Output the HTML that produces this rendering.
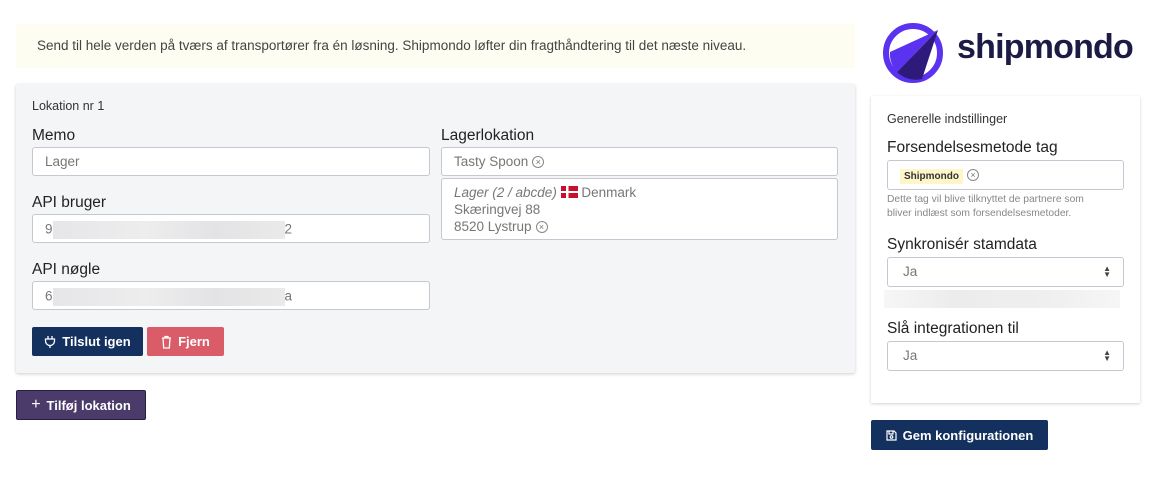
<!DOCTYPE html>
<html><head><meta charset="utf-8"><style>
*{box-sizing:border-box;margin:0;padding:0}
body{width:1154px;height:481px;background:#fff;font-family:"Liberation Sans","DejaVu Sans",sans-serif;color:#333;position:relative;overflow:hidden}
.a{position:absolute}
.banner{left:16px;top:24px;width:839px;height:44px;background:#fdfdf2;font-size:13.5px;color:#444;padding:14px 0 0 21px}
.card{left:16px;top:84px;width:839px;height:289px;background:#f4f5f7;box-shadow:0 1px 3px rgba(0,0,0,.2);border-radius:2px}
.lbl{font-size:15.5px;color:#222}
.inp{background:#fff;border:1px solid #c5c8d0;border-radius:3px;font-size:13.5px;color:#777;padding:6px 12px}
.blur{background:linear-gradient(90deg,#e6e6e8,#ededee 40%,#e3e3e5 70%,#eaeaea);height:18px;display:inline-block;vertical-align:middle}
.btn{color:#fff;font-size:13px;font-weight:bold;border-radius:2px;display:flex;align-items:center;justify-content:center;gap:6px}
.x{display:inline-block;width:12px;height:12px;border:1px solid #888;border-radius:50%;font-size:9px;line-height:10px;text-align:center;color:#777;vertical-align:middle;margin-left:4px}
.rc{left:871px;top:96px;width:269px;height:307px;background:#fff;box-shadow:0 1px 3px rgba(0,0,0,.18)}
.arr{position:absolute;right:12px;top:8px;font-size:8px;line-height:6px;color:#444}
</style></head><body>
<div class="a banner">Send til hele verden på tværs af transportører fra én løsning. Shipmondo løfter din fragthåndtering til det næste niveau.</div>
<div class="a card"></div>
<div class="a" style="left:32px;top:99px;font-size:12.5px;color:#333">Lokation nr 1</div>
<div class="a lbl" style="left:32px;top:127px">Memo</div>
<div class="a inp" style="left:32px;top:147px;width:398px;height:29px">Lager</div>
<div class="a lbl" style="left:32px;top:194px">API bruger</div>
<div class="a inp" style="left:32px;top:214px;width:398px;height:29px">9<span class="blur" style="width:232px"></span>2</div>
<div class="a lbl" style="left:32px;top:261px">API nøgle</div>
<div class="a inp" style="left:32px;top:281px;width:398px;height:29px">6<span class="blur" style="width:232px"></span>a</div>
<div class="a lbl" style="left:441px;top:127px">Lagerlokation</div>
<div class="a inp" style="left:441px;top:147px;width:397px;height:29px">Tasty Spoon<span class="x">×</span></div>
<div class="a inp" style="left:441px;top:178px;width:397px;height:62px;line-height:17px;padding:5px 12px"><i>Lager (2 / abcde)</i> <svg width="17" height="12" style="vertical-align:-1px"><rect width="17" height="12" fill="#c8102e"/><rect x="5" width="2.5" height="12" fill="#fff"/><rect y="5" width="17" height="2" fill="#fff"/></svg> Denmark<br>Skæringvej 88<br>8520 Lystrup<span class="x">×</span></div>
<div class="a btn" style="left:32px;top:327px;width:111px;height:29px;background:#13305f"><svg width="12" height="14" viewBox="0 0 12 14" fill="none" stroke="#fff" stroke-width="1.3"><path d="M4 1v3M8 1v3M1.5 4h9v2a4.5 4.5 0 0 1-9 0zM6 10.5V13"/></svg>Tilslut igen</div>
<div class="a btn" style="left:147px;top:327px;width:77px;height:29px;background:#d95c68"><svg width="11" height="14" viewBox="0 0 11 14" fill="none" stroke="#fff" stroke-width="1.3"><path d="M1 3h9M4 3V1.5h3V3M2 3l.7 10h5.6L9 3"/></svg>Fjern</div>
<div class="a btn" style="left:16px;top:390px;width:130px;height:30px;background:#4b3b6b;border:1px solid #2a1d45;font-weight:bold"><span style="font-size:16px;font-weight:normal">+</span>Tilføj lokation</div>

<svg class="a" style="left:882px;top:22px" width="62" height="62" viewBox="0 0 62 62"><circle cx="31" cy="31" r="27" fill="none" stroke="#5a32f0" stroke-width="6"/><path d="M8 30L56 8 15 50A27 27 0 0 1 8 30z" fill="#5a32f0"/><path d="M56 8L15 50A27 27 0 0 0 40 57z" fill="#2e1a7a"/></svg>
<div class="a" style="left:957px;top:28px;font-size:34px;font-weight:bold;color:#1b1b45;letter-spacing:-0.8px">shipmondo</div>

<div class="a rc"></div>
<div class="a" style="left:887px;top:112px;font-size:12.5px;color:#333">Generelle indstillinger</div>
<div class="a lbl" style="left:887px;top:139px">Forsendelsesmetode tag</div>
<div class="a inp" style="left:887px;top:160px;width:237px;height:30px;padding:6px 12px"><span style="background:#fdf6c8;color:#333;font-size:10px;padding:2px 4px;font-weight:bold">Shipmondo</span><span class="x">×</span></div>
<div class="a" style="left:887px;top:193px;font-size:10.3px;color:#888;line-height:14px">Dette tag vil blive tilknyttet de partnere som<br>bliver indlæst som forsendelsesmetoder.</div>
<div class="a lbl" style="left:887px;top:236px">Synkronisér stamdata</div>
<div class="a inp" style="left:887px;top:257px;width:237px;height:30px;padding:6px 15px">Ja<span class="arr">▲<br>▼</span></div>
<div class="a" style="left:884px;top:290px;width:236px;height:18px;background:linear-gradient(90deg,#f6f6f6,#ececec 30%,#efefef 70%,#f6f6f6)"></div>
<div class="a lbl" style="left:887px;top:320px">Slå integrationen til</div>
<div class="a inp" style="left:887px;top:341px;width:237px;height:30px;padding:6px 15px">Ja<span class="arr">▲<br>▼</span></div>
<div class="a btn" style="left:871px;top:420px;width:177px;height:30px;background:#13305f"><svg width="11" height="11" viewBox="0 0 11 11" fill="none" stroke="#fff" stroke-width="1.2"><path d="M1 1h7l2 2v7H1z"/><path d="M3 1v3h4V1"/><circle cx="5.5" cy="7" r="1.3"/></svg>Gem konfigurationen</div>
</body></html>
